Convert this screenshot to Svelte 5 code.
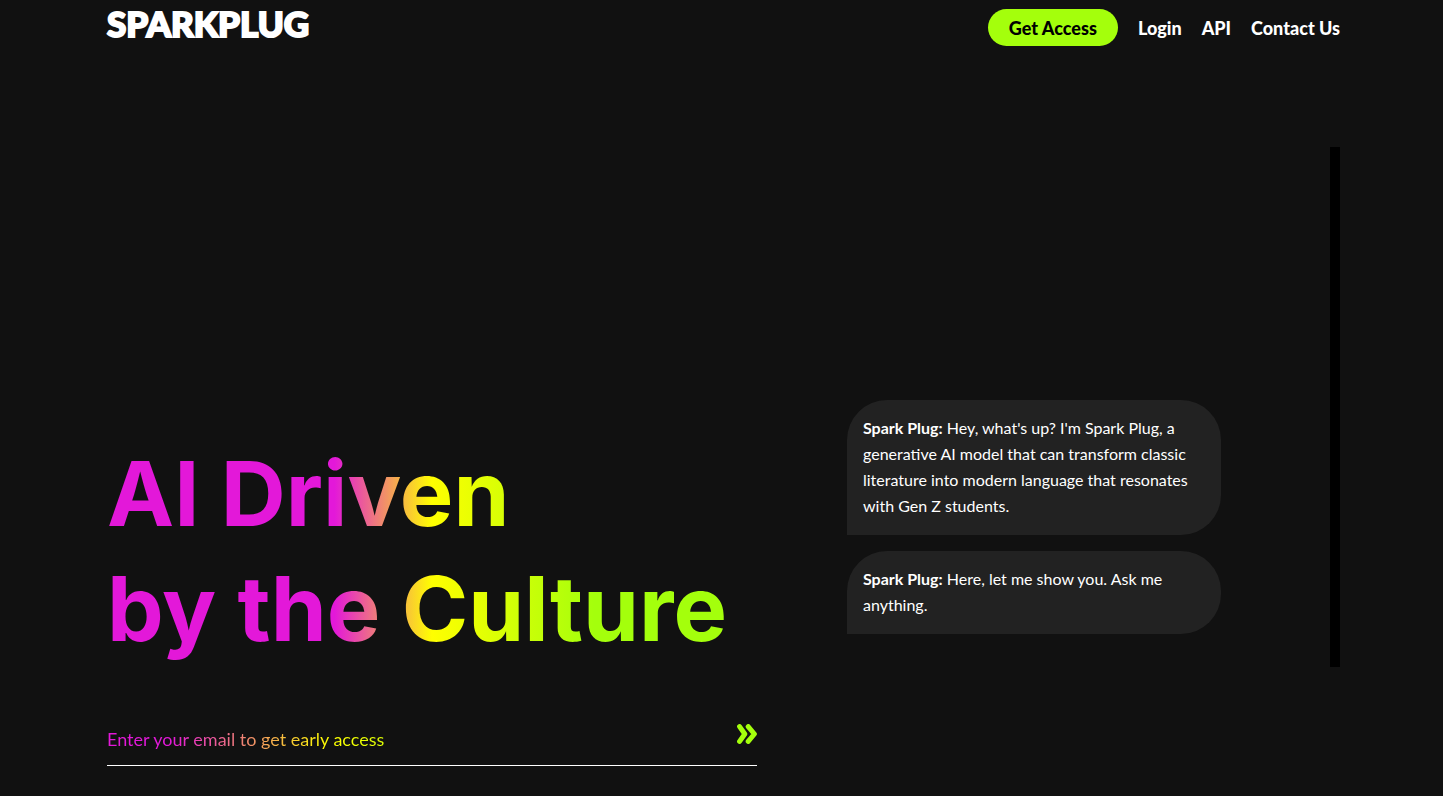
<script>
  let email = $state('')

  const links = ['Login', 'API', 'Contact Us']

  const messages = [
    {
      from: 'Spark Plug',
      lines: [
        "Hey, what's up? I'm Spark Plug, a",
        'generative AI model that can transform classic',
        'literature into modern language that resonates',
        'with Gen Z students.'
      ]
    },
    {
      from: 'Spark Plug',
      lines: ['Here, let me show you. Ask me', 'anything.']
    }
  ]
</script>

<div class="page">
  <header class="header">
    <a class="logo" href="/">SPARKPLUG</a>
    <nav class="nav">
      <button class="access" type="button">Get Access</button>
      {#each links as link}
        <a href="#{link}">{link}</a>
      {/each}
    </nav>
  </header>

  <main class="hero">
    <section class="intro">
      <h1>AI Driven<br />by the Culture</h1>
      <form class="signup" onsubmit={(e) => e.preventDefault()}>
        <input
          type="email"
          aria-label="Email"
          placeholder="Enter your email to get early access"
          bind:value={email}
        />
        <button type="submit" aria-label="Submit">
          <svg viewBox="0 0 20 20" width="20" height="20">
            <path d="M2.6 2.6 L7.8 10 L2.6 17.4 M11.2 2.6 L17.4 10 L11.2 17.4" />
          </svg>
        </button>
      </form>
    </section>

    <section class="chat">
      {#each messages as message}
        <p class="bubble">
          <strong>{message.from}:</strong>
          {#each message.lines as line, i}
            {line}{#if i != message.lines.length - 1}<br />{/if}
          {/each}
        </p>
      {/each}
    </section>
  </main>
</div>

<style>
  :global(body) {
    background: #111;
  }

  .page {
    padding: 0 103px 0 107px;
    color: #fff;
    font-family: Lato, 'Open Sans', sans-serif;
  }

  .header {
    display: flex;
    justify-content: space-between;
    align-items: flex-start;
  }

  .logo {
    color: #fff;
    font-size: 35px;
    line-height: 46px;
    font-weight: 900;
    text-decoration: none;
    -webkit-text-stroke: 2px #fff;
  }

  .nav {
    display: flex;
    align-items: center;
    gap: 20px;
    padding-top: 9px;
    font-size: 18px;
    font-weight: 900;
  }

  .nav a {
    color: #fff;
    text-decoration: none;
  }

  .access {
    height: 37px;
    padding: 0 21px;
    border: 0;
    border-radius: 20px;
    background: #a4ff0c;
    color: #000;
    font: inherit;
    cursor: pointer;
  }

  .hero {
    display: grid;
    grid-template-columns: 650fr 493fr;
    column-gap: 90px;
    align-items: start;
    padding-top: 101px;
  }

  .intro {
    padding-top: 289px;
  }

  h1 {
    margin: 0;
    padding-bottom: 35px;
    background: linear-gradient(90deg, #e318d9 35%, #ff0 50%, #a4ff0c 75%);
    background-clip: text;
    -webkit-background-clip: text;
    color: transparent;
    font-family: Inter, sans-serif;
    font-size: 90px;
    line-height: 115px;
    font-weight: 700;
  }

  .signup {
    display: flex;
    align-items: center;
    height: 64px;
    border-bottom: 1px solid #fff;
  }

  .signup input {
    flex: 1;
    min-width: 0;
    padding: 12px 0 0;
    border: 0;
    outline: 0;
    background: none;
    color: #fff;
    font: inherit;
    font-size: 18px;
  }

  .signup input::placeholder {
    background: linear-gradient(90deg, #e318d9 10%, #ff0 35%, #a4ff0c 60%);
    background-clip: text;
    -webkit-background-clip: text;
    color: transparent;
    opacity: 1;
  }

  .signup button {
    display: flex;
    padding: 2px 0 0;
    border: 0;
    background: none;
    cursor: pointer;
  }

  .signup path {
    fill: none;
    stroke: #a4ff0c;
    stroke-width: 5;
    stroke-linecap: round;
    stroke-linejoin: round;
  }

  .chat {
    display: flex;
    flex-direction: column;
    justify-content: flex-end;
    align-items: flex-start;
    gap: 16px;
    box-sizing: border-box;
    height: 520px;
    padding-bottom: 33px;
    border-right: 10px solid #000;
  }

  .bubble {
    box-sizing: border-box;
    width: 374px;
    max-width: 100%;
    margin: 0;
    padding: 15px 16px 16px;
    border-radius: 40px 40px 40px 0;
    background: #222;
    font-size: 16px;
    line-height: 26px;
  }
</style>
